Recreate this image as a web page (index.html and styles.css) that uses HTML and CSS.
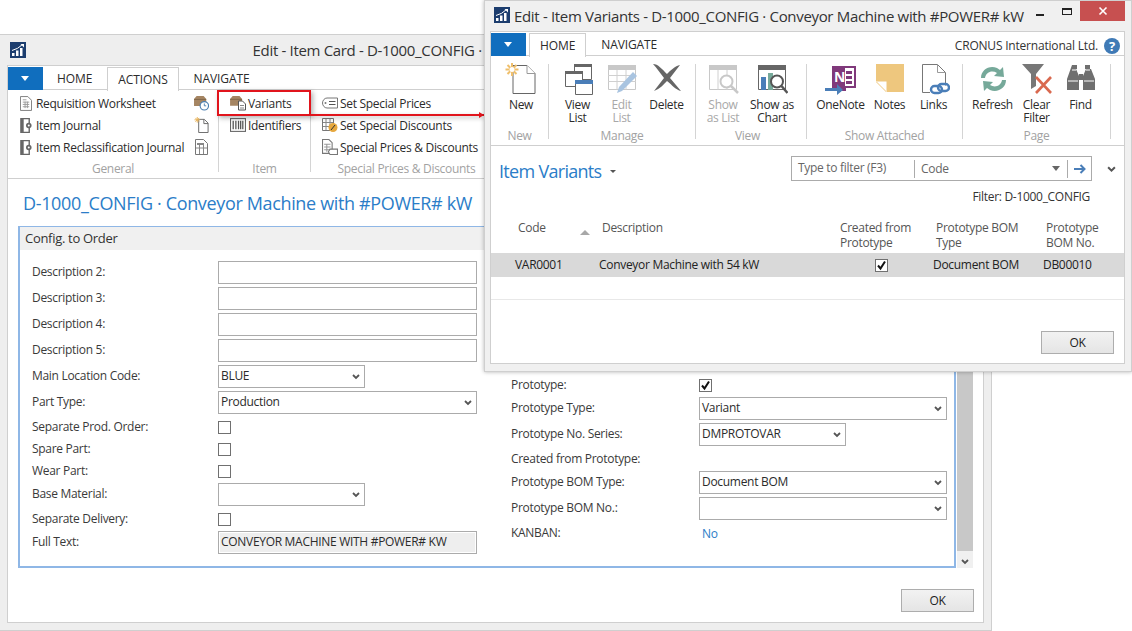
FILE: index.html
```html
<!DOCTYPE html>
<html lang="en">

<head>
    <meta charset="UTF-8">
    <meta name="viewport" content="width=device-width, initial-scale=1.0">
    <title>Edit - Item Variants</title>
    <link rel="stylesheet" href="styles.css">
</head>

<body>
    <svg class="defs" width="0" height="0">
        <symbol id="logo" viewBox="0 0 16 16">
            <rect width="16" height="16" fill="#1c3d6e"/>
            <path d="M2 14v-3h2.500v3zM6 14V8.500h2.500V14zM10 14V6h2.500v8z" fill="#fff"/>
            <path d="M2 8.500Q8 7 12.500 2.500" stroke="#fff" fill="none"/>
            <path d="M10.500 2H14v3.500z" fill="#fff"/>
        </symbol>
        <symbol id="chev" viewBox="0 0 8 6">
            <path d="M1 1l3 3 3-3" stroke="#555" stroke-width="1.800" fill="none"/>
        </symbol>
        <symbol id="tick" viewBox="0 0 13 13">
            <path d="M3 6.500l2.500 3L10 2.500" stroke="#111" stroke-width="2" fill="none"/>
        </symbol>
        <symbol id="worksheet" viewBox="0 0 13 16">
            <path d="M.5.500h8l4 4v11H.5z" fill="#fff" stroke="#777"/>
            <path d="M3 4h4M3 6.500h7M3 9h7M3 11.500h7M5.500 6v7M8 6v7" stroke="#999"/>
        </symbol>
        <symbol id="journal" viewBox="0 0 13 16">
            <path d="M1 .500h9v15H1z" fill="#fff" stroke="#666" stroke-width="1.500"/>
            <path d="M1 1h3v14H1z" fill="#666"/>
            <circle cx="9.500" cy="8" r="3" fill="#666"/>
            <circle cx="9.500" cy="8" r="1.100" fill="#fff"/>
        </symbol>
        <symbol id="box" viewBox="0 0 15 14">
            <path d="M0 4l3-3.500h8L14 4v8H0z" fill="#a58562"/>
            <path d="M0 4.500h14" stroke="#7d6346"/>
        </symbol>
        <symbol id="boxclock" viewBox="0 0 16 16">
            <use href="#box" width="14" height="13"/>
            <circle cx="11" cy="11" r="4.500" fill="#fff" stroke="#4a7eb0" stroke-width="1.200"/>
            <path d="M11 8.500V11h2" stroke="#4a7eb0" fill="none"/>
        </symbol>
        <symbol id="newsmall" viewBox="0 0 15 17">
            <path d="M4.500 2.500h6l4 4v10h-10z" fill="#fff" stroke="#666"/>
            <path d="M10 2.500v4.500h4.500" fill="none" stroke="#666"/>
            <path d="M3 0v6M0 3h6M1 1l4 4M5 1L1 5" stroke="#e9b35a"/>
        </symbol>
        <symbol id="columns" viewBox="0 0 13 16">
            <path d="M.5.500h8l4 4v11H.5z" fill="#fff" stroke="#777"/>
            <path d="M2 4h7v2H2z" fill="#888"/>
            <path d="M4.500 6v9M8.500 6v9M1 9h11" stroke="#888"/>
        </symbol>
        <symbol id="variants" viewBox="0 0 16 15">
            <use href="#box" width="13" height="12"/>
            <path d="M8.500 5.500h4l3 3v6h-7z" fill="#fff" stroke="#555"/>
            <path d="M10 10h4M10 12.500h4" stroke="#888"/>
        </symbol>
        <symbol id="barcode" viewBox="0 0 15 13">
            <rect x=".5" y=".5" width="14" height="12" fill="#fff" stroke="#666"/>
            <path d="M3 2.500v8M5.500 2.500v8M8 2.500v8M10 2.500v8M12 2.500v8" stroke="#555" stroke-width="1.200"/>
        </symbol>
        <symbol id="tag" viewBox="0 0 16 11">
            <path d="M5 .500h10.500v10H5C2.500 10.500.5 8 .5 5.500S2.500.500 5 .500z" fill="#fff" stroke="#777"/>
            <path d="M7 4h6.500M7 7h6.500" stroke="#555"/>
            <circle cx="3.500" cy="5.500" r="1" fill="#777"/>
        </symbol>
        <symbol id="discount" viewBox="0 0 16 14">
            <path d="M.5.500h11v12H.5z" fill="#fff" stroke="#777"/>
            <path d="M4 1v11M8 1v11M1 4.500h10M1 8.500h10" stroke="#888"/>
            <circle cx="11" cy="9.500" r="4.500" fill="#e6a83e"/>
            <path d="M9 12l4-5" stroke="#333"/>
        </symbol>
        <symbol id="pricedoc" viewBox="0 0 15 15">
            <path d="M.5.500h6l3 3v10H.5z" fill="#fff" stroke="#777"/>
            <path d="M2 5h6M2 7.500h6M2 10h6M4.500 5v7" stroke="#999"/>
            <path d="M7.500 9.500h7v5h-7l-1.500-2.500z" fill="#fff" stroke="#777"/>
        </symbol>
    </svg>

    <!-- item card behind -->
    <div class="window window-back">
        <div class="title-bar title-bar-center">
            <svg class="logo"><use href="#logo"/></svg>
            <div class="title-text">Edit - Item Card - D-1000_CONFIG · Conveyor Machine with #POWER# kW</div>
        </div>
        <div class="panel">
            <div class="tabs">
                <div class="app-btn"></div>
                <div class="tab tab-first">HOME</div>
                <div class="tab tab-active">ACTIONS</div>
                <div class="tab tab-nav">NAVIGATE</div>
            </div>
            <div class="ribbon ribbon-small">
                <div class="rgroup rgroup-general">
                    <div class="rgroup-body list-cols">
                        <div class="list-col-general">
                            <div class="sitem"><svg class="sicon"><use href="#worksheet"/></svg>Requisition Worksheet</div>
                            <div class="sitem"><svg class="sicon"><use href="#journal"/></svg>Item Journal</div>
                            <div class="sitem"><svg class="sicon"><use href="#journal"/></svg>Item Reclassification Journal</div>
                        </div>
                        <div class="list-col-icons">
                            <div class="sitem"><svg class="sicon"><use href="#boxclock"/></svg></div>
                            <div class="sitem"><svg class="sicon"><use href="#newsmall"/></svg></div>
                            <div class="sitem"><svg class="sicon"><use href="#columns"/></svg></div>
                        </div>
                    </div>
                    <div class="rgroup-label">General</div>
                </div>
                <div class="rgroup rgroup-item">
                    <div class="rgroup-body">
                        <div class="sitem"><svg class="sicon sicon-wide"><use href="#variants"/></svg>Variants</div>
                        <div class="sitem"><svg class="sicon sicon-wide"><use href="#barcode"/></svg>Identifiers</div>
                    </div>
                    <div class="rgroup-label">Item</div>
                </div>
                <div class="rgroup rgroup-prices">
                    <div class="rgroup-body">
                        <div class="sitem"><svg class="sicon sicon-wide"><use href="#tag"/></svg>Set Special Prices</div>
                        <div class="sitem"><svg class="sicon sicon-wide"><use href="#discount"/></svg>Set Special Discounts</div>
                        <div class="sitem"><svg class="sicon sicon-wide"><use href="#pricedoc"/></svg>Special Prices &amp; Discounts</div>
                    </div>
                    <div class="rgroup-label">Special Prices &amp; Discounts</div>
                </div>
            </div>

            <h1 class="card-title">D-1000_CONFIG · Conveyor Machine with #POWER# kW</h1>

            <div class="card-body">
                <div class="fasttab">
                    <div class="fasttab-head">Config. to Order</div>
                    <div class="form">
                        <div class="form-col">
                            <div class="row"><label>Description 2:</label><div class="input"></div></div>
                            <div class="row"><label>Description 3:</label><div class="input"></div></div>
                            <div class="row"><label>Description 4:</label><div class="input"></div></div>
                            <div class="row"><label>Description 5:</label><div class="input"></div></div>
                            <div class="row"><label>Main Location Code:</label><div class="input short">BLUE<svg class="chev"><use href="#chev"/></svg></div></div>
                            <div class="row"><label>Part Type:</label><div class="input">Production<svg class="chev"><use href="#chev"/></svg></div></div>
                            <div class="row row-check"><label>Separate Prod. Order:</label><div class="check"></div></div>
                            <div class="row row-check"><label>Spare Part:</label><div class="check"></div></div>
                            <div class="row row-check"><label>Wear Part:</label><div class="check"></div></div>
                            <div class="row"><label>Base Material:</label><div class="input short"><svg class="chev"><use href="#chev"/></svg></div></div>
                            <div class="row row-check"><label>Separate Delivery:</label><div class="check"></div></div>
                            <div class="row"><label>Full Text:</label><div class="input readonly">CONVEYOR MACHINE WITH #POWER# KW</div></div>
                        </div>
                        <div class="form-col form-col-right">
                            <div class="row row-check"><label>Prototype:</label><div class="check"><svg><use href="#tick"/></svg></div></div>
                            <div class="row"><label>Prototype Type:</label><div class="input">Variant<svg class="chev"><use href="#chev"/></svg></div></div>
                            <div class="row"><label>Prototype No. Series:</label><div class="input short">DMPROTOVAR<svg class="chev"><use href="#chev"/></svg></div></div>
                            <div class="row row-check"><label>Created from Prototype:</label></div>
                            <div class="row"><label>Prototype BOM Type:</label><div class="input">Document BOM<svg class="chev"><use href="#chev"/></svg></div></div>
                            <div class="row"><label>Prototype BOM No.:</label><div class="input"><svg class="chev"><use href="#chev"/></svg></div></div>
                            <div class="row row-check"><label>KANBAN:</label><a class="link">No</a></div>
                        </div>
                    </div>
                </div>
                <div class="scrollbar">
                    <div class="scroll-thumb"></div>
                    <div class="scroll-arrow"><svg class="chev"><use href="#chev"/></svg></div>
                </div>
            </div>
            <div class="footer footer-back"><div class="btn">OK</div></div>
        </div>
    </div>

    <!-- annotation from the screenshot -->
    <div class="callout"></div>
    <div class="callout-line"></div>

    <!-- variants popup -->
    <div class="window window-front">
        <div class="title-bar">
            <svg class="logo"><use href="#logo"/></svg>
            <div class="title-text">Edit - Item Variants - D-1000_CONFIG · Conveyor Machine with #POWER# kW</div>
            <div class="win-btns">
                <div class="win-min"></div>
                <div class="win-max"></div>
                <div class="win-close">
                    <svg width="10" height="10" viewBox="0 0 10 10"><path d="M1.500 1.500l7 7M8.500 1.500l-7 7" stroke="#fff" stroke-width="1.600"/></svg>
                </div>
            </div>
        </div>
        <div class="panel">
            <div class="tabs">
                <div class="app-btn"></div>
                <div class="tab tab-active tab-home">HOME</div>
                <div class="tab tab-nav">NAVIGATE</div>
                <div class="company">CRONUS International Ltd.</div>
                <div class="help">?</div>
            </div>
            <div class="ribbon ribbon-big">
                <div class="rgroup rg-new">
                    <div class="rgroup-body bigs">
                        <div class="bitem w57">
                            <svg class="bicon" viewBox="0 0 32 32"><path d="M8 2.500h14l8 8v20H8z" fill="#fff" stroke="#666"/><path d="M22 2.500v8h8" fill="#fff" stroke="#999"/><path d="M7 0v13M.5 6.500h13M2.500 2l9 9M11.500 2l-9 9" stroke="#efbf6c" stroke-width="2"/><circle cx="7" cy="6.500" r="2.500" fill="#fff"/></svg>
                            <span>New</span>
                        </div>
                    </div>
                    <div class="rgroup-label">New</div>
                </div>
                <div class="rgroup rg-manage">
                    <div class="rgroup-body bigs">
                        <div class="bitem w44">
                            <svg class="bicon" viewBox="0 0 32 32"><path d="M12.500 3.500h17v13h-17z" fill="#fff" stroke="#666"/><path d="M12 1h18v3H12z" fill="#666"/><path d="M3.500 10.500h17v13h-17z" fill="#fff" stroke="#666"/><path d="M3 8h18v3H3z" fill="#666"/><path d="M13.500 18.500h17v13h-17z" fill="#fff" stroke="#666"/><path d="M13 17h18v4H13z" fill="#4a7eb8"/></svg>
                            <span>View<br>List</span>
                        </div>
                        <div class="bitem w44 off">
                            <svg class="bicon" viewBox="0 0 32 32"><path d="M2.500 3.500h27v23h-27z" fill="#fff" stroke="#c8c8c8"/><path d="M2 2h28v5H2z" fill="#c8c8c8"/><path d="M2 12.500h28M2 18.500h28M11 7v20M20 7v20" stroke="#d0d0d0"/><path d="M11 30l2-6L27 9l4 4-15 15z" fill="#a9c4e0"/></svg>
                            <span>Edit<br>List</span>
                        </div>
                        <div class="bitem w46">
                            <svg class="bicon" viewBox="0 0 32 32"><path d="M2 1c5 0 9 5 14 10 4-4 8-8 13-9l-10 13 11 13c-5-1-9-6-14-10-3 3-7 8-13 10l10-13C9 10 6 5 2 1z" fill="#666"/></svg>
                            <span>Delete</span>
                        </div>
                    </div>
                    <div class="rgroup-label">Manage</div>
                </div>
                <div class="rgroup rg-view">
                    <div class="rgroup-body bigs">
                        <div class="bitem w49 off">
                            <svg class="bicon" viewBox="0 0 32 32"><path d="M2.500 3.500h27v23h-27z" fill="#fff" stroke="#c8c8c8"/><path d="M2 2h28v5H2z" fill="#c8c8c8"/><path d="M11 7v20M20 7v20" stroke="#d0d0d0"/><circle cx="19.500" cy="18.500" r="6" fill="#fff" stroke="#c8c8c8" stroke-width="2"/><path d="M24 23l7 7" stroke="#c8c8c8" stroke-width="2.500"/></svg>
                            <span>Show<br>as List</span>
                        </div>
                        <div class="bitem w49">
                            <svg class="bicon" viewBox="0 0 32 32"><path d="M2.500 3.500h27v23h-27z" fill="#fff" stroke="#666"/><path d="M2 2h28v5H2z" fill="#666"/><path d="M5 14h5v13H5z" fill="#4a7eb8"/><path d="M12 10h5v17h-5z" fill="#76a99a"/><circle cx="21" cy="18.500" r="6" fill="#fff" stroke="#555" stroke-width="2"/><path d="M25.500 23l6 7" stroke="#555" stroke-width="2.500"/></svg>
                            <span>Show as<br>Chart</span>
                        </div>
                    </div>
                    <div class="rgroup-label">View</div>
                </div>
                <div class="rgroup rg-attached">
                    <div class="rgroup-body bigs">
                        <div class="bitem w54">
                            <svg class="bicon" viewBox="0 0 32 32"><path d="M7 3h14v25H7z" fill="#80397b"/><path d="M19 4h11v20H19z" fill="#fff" stroke="#80397b" stroke-width="2"/><path d="M21 8h6v3h-6zM21 13h6v3h-6zM21 18h6v3h-6z" fill="#80397b"/><path d="M0 25h12v-4l6 6-6 5v-4H0z" fill="#4a7eb8"/><text x="9" y="19" class="onenote-n">N</text></svg>
                            <span>OneNote</span>
                        </div>
                        <div class="bitem w44">
                            <svg class="bicon" viewBox="0 0 32 32"><path d="M2 1h28v28H12L2 19z" fill="#eec77e"/><path d="M2 18h11v11z" fill="#fff"/><path d="M3 18h10v10" fill="none" stroke="#eec77e"/></svg>
                            <span>Notes</span>
                        </div>
                        <div class="bitem w44">
                            <svg class="bicon" viewBox="0 0 32 32"><path d="M4.500 1.500h15l8 8v13M12 29.500H4.500v-28" fill="#fff" stroke="#777"/><path d="M19.500 1.500v8h8" fill="none" stroke="#999"/><rect x="13" y="23" width="11" height="7" rx="3.500" fill="none" stroke="#4a7eb8" stroke-width="2.400"/><rect x="20" y="21" width="11" height="7" rx="3.500" fill="none" stroke="#4a7eb8" stroke-width="2.400"/></svg>
                            <span>Links</span>
                        </div>
                    </div>
                    <div class="rgroup-label">Show Attached</div>
                </div>
                <div class="rgroup rg-page">
                    <div class="rgroup-body bigs">
                        <div class="bitem w44">
                            <svg class="bicon" viewBox="0 0 32 32"><path d="M4 15C4 7 12 2 20 5l3 2 3-3 1 10-10-1 3-3c-5-3-11-1-12 5z" fill="#76a99a"/><path d="M29 17c0 8-8 13-16 10l-3-2-3 3-1-10 10 1-3 3c5 3 11 1 12-5z" fill="#76a99a"/></svg>
                            <span>Refresh</span>
                        </div>
                        <div class="bitem w44">
                            <svg class="bicon" viewBox="0 0 32 32"><path d="M1 1h22l-8 10v12l-5 3V11z" fill="#777"/><path d="M15 14l15 16M30 14L15 30" stroke="#d9694f" stroke-width="2.600"/></svg>
                            <span>Clear<br>Filter</span>
                        </div>
                        <div class="bitem w44">
                            <svg class="bicon" viewBox="0 0 32 32"><path d="M7 2h5v4h-1l3 7v14H2V16z" fill="#6f6f6f"/><path d="M20 2h5v4h1l4 10v11H18V13l3-7h-1z" fill="#6f6f6f"/><path d="M14 11h4v6h-4z" fill="#6f6f6f"/><path d="M3 18h10M19 18h10M7 7h4M21 7h4" stroke="#fff" stroke-width="1"/></svg>
                            <span>Find</span>
                        </div>
                    </div>
                    <div class="rgroup-label">Page</div>
                </div>
            </div>

            <div class="list-head">
                <div class="list-title">Item Variants</div>
                <div class="list-menu"></div>
                <div class="filter-box">
                    <div class="filter-hint">Type to filter (F3)</div>
                    <div class="filter-field">Code</div>
                    <div class="filter-drop"></div>
                    <div class="filter-go">
                        <svg width="12" height="10" viewBox="0 0 12 10"><path d="M0 5h10M6.500 1l4 4-4 4" stroke="#4a7eb8" stroke-width="2" fill="none"/></svg>
                    </div>
                </div>
                <svg class="list-chev"><use href="#chev"/></svg>
            </div>
            <div class="filter-note">Filter: D-1000_CONFIG</div>

            <div class="grid grid-head">
                <div class="col-code">Code<span class="sort"></span></div>
                <div>Description</div>
                <div>Created from<br>Prototype</div>
                <div>Prototype BOM<br>Type</div>
                <div>Prototype<br>BOM No.</div>
            </div>
            <div class="grid grid-row">
                <div>VAR0001</div>
                <div>Conveyor Machine with 54 kW</div>
                <div><div class="check check-cell"><svg><use href="#tick"/></svg></div></div>
                <div>Document BOM</div>
                <div>DB00010</div>
            </div>
            <div class="grid-empty"></div>
            <div class="footer footer-front"><div class="btn">OK</div></div>
        </div>
    </div>
</body>

</html>
```

FILE: styles.css
```css
* {
    box-sizing: border-box;
}

body {
    margin: 0;
    width: 1132px;
    height: 631px;
    position: relative;
    overflow: hidden;
    background: white;
    font-family: "Open Sans", sans-serif;
    font-size: 12px;
    letter-spacing: -0.3px;
    color: #333;
}

.defs {
    position: absolute;
}

/* windows */
.window {
    position: absolute;
    display: flex;
    flex-direction: column;
    background: #eeeeee;
    border: 1px solid #cfcfcf;
}

.window-back {
    left: 0;
    top: 34px;
    width: 992px;
    height: 597px;
    padding: 0 7px 7px 7px;
    border-left: 0;
}

.window-front {
    left: 484px;
    top: 0;
    width: 648px;
    height: 372px;
    padding: 0 6px 7px 5px;
    background: #f0f0f0;
    box-shadow: 0 0 4px rgba(0, 0, 0, 0.3);
}

.title-bar {
    height: 30px;
    display: flex;
    flex-shrink: 0;
    position: relative;
    font-size: 15px;
}

.title-text {
    line-height: 30px;
    white-space: nowrap;
    color: #333;
    letter-spacing: -0.33px;
}

.title-bar-center .title-text {
    flex: 1;
    text-align: center;
    padding-right: 18px;
}

.logo {
    width: 16px;
    height: 16px;
    margin: 6px 4px 0 4px;
}

.title-bar-center .logo {
    margin: 7px 0 0 3px;
}

.win-btns {
    display: flex;
    margin-left: auto;
}

.win-min {
    width: 8px;
    height: 2px;
    margin: 13px 18px 0 0;
    background: #222;
}

.win-max {
    width: 10px;
    height: 7px;
    margin: 7px 8px 0 0;
    border: 1px solid #222;
    border-top-width: 2px;
}

.win-close {
    width: 45px;
    height: 20px;
    margin-top: 0;
    background: #c75050;
    display: flex;
    align-items: center;
    justify-content: center;
}

.panel {
    flex: 1;
    display: flex;
    flex-direction: column;
    background: white;
    border: 1px solid #cfcfcf;
    min-height: 0;
}

/* tabs */
.tabs {
    height: 24px;
    display: flex;
    flex-shrink: 0;
    align-items: stretch;
    padding-top: 1px;
    border-bottom: 1px solid #cfcfcf;
}

.app-btn {
    width: 35px;
    background: #106ebe;
    position: relative;
    margin-bottom: -1px;
}

.app-btn::after {
    content: "";
    position: absolute;
    left: 13px;
    top: 9px;
    border: 4px solid transparent;
    border-top: 5px solid #fff;
    border-bottom: 0;
}

.tab {
    padding: 0 14px;
    line-height: 24px;
    color: #2b2b2b;
    letter-spacing: -0.1px;
}

.tab-active {
    background: white;
    border: 1px solid #cfcfcf;
    border-bottom: 0;
    height: 24px;
    padding: 0 10px;
    line-height: 24px;
}

.tab-first {
    padding: 0 15px 0 14px;
}

.tab-home {
    margin-left: 3px;
    padding: 0 10px;
}

.tab-nav {
    padding-left: 15px;
}

.company {
    margin-left: auto;
    line-height: 26px;
    padding-right: 6px;
    letter-spacing: -0.2px;
}

.help {
    width: 16px;
    height: 16px;
    margin: 5px 4px 0 0;
    border-radius: 50%;
    background: #3f7ab6;
    color: white;
    font-weight: bold;
    font-size: 13px;
    line-height: 16px;
    text-align: center;
}

/* ribbon */
.ribbon {
    display: flex;
    flex-shrink: 0;
    border-bottom: 1px solid #cfcfcf;
}

.ribbon-small {
    height: 89px;
}

.ribbon-big {
    height: 90px;
    padding-top: 8px;
}

.rgroup {
    display: flex;
    flex-direction: column;
    flex-shrink: 0;
    border-right: 1px solid #d4d4d4;
}

.ribbon-small .rgroup {
    height: 82px;
}

.ribbon-big .rgroup {
    height: 75px;
}

.rgroup-body {
    flex: 1;
    min-height: 0;
    padding-top: 2px;
}

.rgroup-label {
    height: 14px;
    line-height: 14px;
    margin-bottom: -4px;
    text-align: center;
    color: #a2a2a2;
    white-space: nowrap;
}

.rgroup-general {
    width: 211px;
    padding-left: 12px;
}

.rgroup-general .rgroup-label {
    padding-right: 12px;
}

.rgroup-item {
    width: 92px;
    padding-left: 11px;
}

.rgroup-item .rgroup-label {
    padding-right: 11px;
}

.rgroup-prices {
    width: 180px;
    padding-left: 11px;
    border-right: 0;
}

.list-cols {
    display: flex;
}

.list-col-general {
    width: 174px;
}

.sitem {
    height: 22px;
    display: flex;
    align-items: center;
    white-space: nowrap;
    color: #2b2b2b;
}

.sicon {
    width: 12px;
    height: 15px;
    margin-right: 4px;
    flex-shrink: 0;
}

.list-col-icons .sicon {
    width: 15px;
    height: 16px;
}

.sicon-wide {
    width: 16px;
    height: 16px;
    margin-right: 2px;
}

/* big ribbon buttons */
.bigs {
    display: flex;
    justify-content: center;
    padding-top: 0;
}

.bitem {
    display: flex;
    flex-direction: column;
    align-items: center;
    text-align: center;
    line-height: 13px;
    color: #2b2b2b;
    flex-shrink: 0;
}

.bitem.off {
    color: #a8a8a8;
}

.bicon {
    width: 32px;
    height: 32px;
    margin: -1px 0 3px;
}

.w44 {
    width: 44px;
}

.w46 {
    width: 46px;
}

.w49 {
    width: 49px;
}

.w54 {
    width: 54px;
}

.w57 {
    width: 57px;
}

.rg-new {
    width: 58px;
}

.rg-new .bigs {
    padding-left: 3px;
}

.rg-manage {
    width: 147px;
}

.rg-manage .bigs {
    padding-left: 1px;
}

.rg-view {
    width: 111px;
    padding-right: 7px;
}

.rg-attached {
    width: 156px;
}

.rg-page {
    width: 148px;
}

.onenote-n {
    font-size: 14px;
    font-weight: bold;
    fill: #fff;
}

/* item card */
.card-title {
    margin: 0;
    height: 47px;
    flex-shrink: 0;
    padding: 12px 0 0 15px;
    font-size: 18px;
    font-weight: normal;
    line-height: 24px;
    letter-spacing: -0.35px;
    color: #2b7dc8;
    white-space: nowrap;
}

.card-body {
    display: flex;
    padding-left: 10px;
    flex-shrink: 0;
}

.fasttab {
    width: 938px;
    height: 342px;
    border: 1px solid #8fb7e6;
    border-width: 1px 2px 2px 2px;
}

.fasttab-head {
    height: 23px;
    line-height: 22px;
    padding-left: 5px;
    background: #f0f0f0;
    font-size: 13px;
    letter-spacing: -0.3px;
}

.form {
    display: grid;
    grid-template-columns: 479px 1fr;
    padding: 11px 0 0 12px;
}

.form-col-right {
    padding-top: 114px;
}

.row {
    height: 26px;
    display: flex;
}

.row-check {
    height: 22px;
    align-items: center;
}

.row-check > * {
    margin-top: -2px;
}

.row label {
    width: 186px;
    flex-shrink: 0;
    line-height: 22px;
    color: #3a3a3a;
}

.form-col-right .row label {
    width: 188px;
}

.input {
    width: 259px;
    height: 23px;
    border: 1px solid #ababab;
    padding-left: 2px;
    line-height: 20px;
    position: relative;
    white-space: nowrap;
    color: #2b2b2b;
}

.form-col-right .input {
    width: 248px;
}

.form-col-right .input.short,
.input.short {
    width: 147px;
}

.readonly {
    background: #eeeeee;
    box-shadow: inset 0 0 0 1px white;
}

.chev {
    position: absolute;
    right: 4px;
    top: 8px;
    width: 8px;
    height: 6px;
}

.check {
    width: 13px;
    height: 13px;
    border: 1px solid #707070;
    position: relative;
    flex-shrink: 0;
}

.check svg {
    position: absolute;
    left: -1px;
    top: -1px;
    width: 13px;
    height: 13px;
}

.link {
    color: #2b7dc8;
    padding-left: 3px;
}

.scrollbar {
    width: 16px;
    height: 342px;
    margin-left: 1px;
    display: flex;
    flex-direction: column;
    background: #f0f0f0;
}

.scroll-thumb {
    flex: 1;
    background: #c8c8c8;
}

.scroll-arrow {
    height: 17px;
    position: relative;
}

.footer {
    display: flex;
    justify-content: flex-end;
}

.footer-back {
    padding: 21px 9px 0 0;
}

.footer-front {
    padding: 31px 10px 0 0;
}

.btn {
    width: 73px;
    height: 23px;
    border: 1px solid #adadad;
    background: linear-gradient(#f2f2f2, #e5e5e5);
    text-align: center;
    line-height: 21px;
    color: #222;
}

/* red callout */
.callout {
    position: absolute;
    left: 217px;
    top: 90px;
    width: 94px;
    height: 26px;
    border: 2px solid #e1141c;
    box-shadow: 2px 2px 5px rgba(0, 0, 0, 0.3);
}

.callout-line {
    position: absolute;
    left: 310px;
    top: 114px;
    width: 174px;
    height: 2px;
    background: #e1141c;
    box-shadow: 1px 2px 4px rgba(0, 0, 0, 0.3);
}

.callout-line::after {
    content: "";
    position: absolute;
    right: 0;
    top: -2px;
    border: 3px solid transparent;
    border-left: 5px solid #e1141c;
    border-right: 0;
}

/* list page */
.list-head {
    height: 35px;
    flex-shrink: 0;
    display: flex;
    padding-top: 10px;
    position: relative;
}

.list-title {
    margin-left: 8px;
    font-size: 18px;
    line-height: 30px;
    letter-spacing: -0.7px;
    color: #2b7dc8;
}

.list-menu {
    margin: 14px 0 0 9px;
    width: 0;
    height: 0;
    border: 3px solid transparent;
    border-top: 3px solid #555;
    border-bottom: 0;
}

.filter-box {
    margin-left: auto;
    margin-right: 32px;
    width: 301px;
    height: 25px;
    display: flex;
    border: 1px solid #ababab;
    align-items: center;
    color: #666;
}

.filter-hint {
    width: 122px;
    padding-left: 6px;
    margin-top: -3px;
}

.filter-field {
    flex: 1;
    height: 18px;
    line-height: 18px;
    padding-left: 6px;
    border-left: 1px solid #ababab;
}

.filter-drop {
    border: 4px solid transparent;
    border-top: 5px solid #666;
    border-bottom: 0;
    margin-right: 7px;
}

.filter-go {
    width: 24px;
    height: 18px;
    border-left: 1px solid #ababab;
    display: flex;
    align-items: center;
    justify-content: center;
}

.list-chev {
    position: absolute;
    right: 8px;
    top: 20px;
    width: 9px;
    height: 7px;
}

.filter-note {
    height: 23px;
    flex-shrink: 0;
    padding: 9px 34px 0 0;
    line-height: 14px;
    text-align: right;
    color: #333;
}

.grid {
    display: grid;
    grid-template-columns: 84px 238px 96px 110px 1fr;
    padding-left: 24px;
    flex-shrink: 0;
}

.grid-head {
    height: 49px;
    padding-top: 16px;
    line-height: 15px;
    color: #555;
}

.grid-head > div {
    padding-left: 3px;
}

.col-code {
    position: relative;
}

.sort {
    position: absolute;
    left: 65px;
    top: 10px;
    border: 5px solid transparent;
    border-bottom: 5px solid #a8a8a8;
    border-top: 0;
}

.grid-row {
    height: 24px;
    line-height: 24px;
    background: #d9d9d9;
    color: #222;
}

.check-cell {
    margin: 6px 0 0 38px;
    background: white;
}

.grid-empty {
    height: 23px;
    flex-shrink: 0;
    border-bottom: 1px solid #e8e8e8;
}
```
